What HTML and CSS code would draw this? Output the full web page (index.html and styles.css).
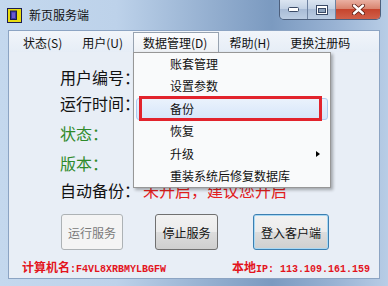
FILE: index.html
```html
<!DOCTYPE html>
<html lang="zh-CN">
<head>
    <meta charset="UTF-8">
    <title>新页服务端</title>
    <link rel="stylesheet" href="styles.css">
</head>
<body>
    <div class="window">
        <div class="titlebar">
            <svg class="app-icon" width="15" height="15" viewBox="0 0 15 15">
                <rect x="0.5" y="0.5" width="14" height="14" fill="#e8dc10" stroke="#1c1c50"/>
                <rect x="3.5" y="3" width="6" height="8.5" fill="#3a3aa8" stroke="#1c1c50"/>
                <rect x="5" y="4.5" width="3" height="5.5" fill="#6a5ad0"/>
            </svg>
            <span class="title">新页服务端</span>
            <div class="caption-btns">
                <div class="cap">
                    <svg width="11" height="5" viewBox="0 0 11 5"><rect x="0.5" y="0.5" width="10" height="4" rx="1" fill="#fff" stroke="#3a4a66"/></svg>
                </div>
                <div class="cap">
                    <svg width="12" height="10" viewBox="0 0 12 10"><rect x="0.5" y="0.5" width="11" height="9" fill="#fff" stroke="#3a4a66"/><rect x="2.5" y="3.5" width="7" height="4" fill="#8ea3bd" stroke="#3a4a66"/></svg>
                </div>
                <div class="cap close">
                    <svg width="13" height="11" viewBox="0 0 13 11"><path d="M2 1.5 L11 9.5 M11 1.5 L2 9.5" stroke="#5a1a10" stroke-width="4" stroke-linecap="round"/><path d="M2 1.5 L11 9.5 M11 1.5 L2 9.5" stroke="#fff" stroke-width="2.4" stroke-linecap="round"/></svg>
                </div>
            </div>
        </div>
        <div class="client">
            <div class="menubar">
                <span class="menu-item">状态(S)</span>
                <span class="menu-item">用户(U)</span>
                <span class="menu-item open">数据管理(D)
                    <div class="dropdown">
                        <div class="dd-item">账套管理</div>
                        <div class="dd-item">设置参数</div>
                        <div class="dd-item hover">备份</div>
                        <div class="dd-item">恢复</div>
                        <div class="dd-item sub">升级<span class="arrow"></span></div>
                        <div class="dd-item">重装系统后修复数据库</div>
                        <div class="mark"></div>
                    </div>
                </span>
                <span class="menu-item">帮助(H)</span>
                <span class="menu-item">更换注册码</span>
            </div>
            <div class="info">
                <div class="row">用户编号：</div>
                <div class="row">运行时间：</div>
                <div class="row green gap">状态：</div>
                <div class="row green gap">版本：</div>
                <div class="row last">自动备份：<span class="warn">未开启，建议您开启</span></div>
            </div>
            <div class="actions">
                <button class="btn run" disabled>运行服务</button>
                <button class="btn stop">停止服务</button>
                <button class="btn login">登入客户端</button>
            </div>
            <div class="footer">
                <span class="host"><b>计算机名</b><span class="mono">:F4VL8XRBMYLBGFW</span></span>
                <span class="ip"><b>本地</b><span class="mono">IP: 113.109.161.159</span></span>
            </div>
        </div>
    </div>
</body>
</html>
```

FILE: styles.css
```css
body {
    margin: 0;
    font-family: "Noto Sans CJK SC", "Noto Sans", sans-serif;
    color: #111;
}
.window {
    width: 388px;
    height: 286px;
    background: linear-gradient(90deg, #c4d8ee 0%, #bdd2ea 30%, #93aecf 55%, #7b9ac0 70%, #98b2d3 86%, #b8cde6 100%);
    display: flex;
    flex-direction: column;
    overflow: hidden;
}
.titlebar {
    position: relative;
    height: 30px;
    display: flex;
    align-items: center;
    padding-left: 7px;
}
.app-icon {
    display: block;
}
.title {
    margin-left: 7px;
    font-size: 12px;
    line-height: 14px;
}
.caption-btns {
    position: absolute;
    top: 0;
    right: 7px;
    display: flex;
    height: 19px;
    border: 1px solid #4d5f7c;
    border-top: none;
    border-radius: 0 0 5px 5px;
    overflow: hidden;
}
.cap {
    width: 27px;
    display: flex;
    align-items: center;
    justify-content: center;
    background: linear-gradient(#dbe5f1 0%, #c3d2e5 45%, #a9bcd6 50%, #bccde3 100%);
    border-right: 1px solid #6e82a0;
}
.cap.close {
    width: 44px;
    border-right: none;
    background: linear-gradient(#eab0a2 0%, #d98570 45%, #c6452e 50%, #d0604a 100%);
}
.client {
    margin: 0 8px;
    height: 249px;
    box-sizing: border-box;
    border: 1px solid #8ca4c3;
    background: #e8eef6;
}
.menubar {
    height: 21px;
    display: flex;
    align-items: flex-end;
    padding-left: 4px;
    background: linear-gradient(#f1f5fa, #e6edf6);
    font-size: 12px;
}
.menu-item {
    position: relative;
    height: 20px;
    line-height: 20px;
    padding: 0 9px;
    border: 1px solid transparent;
    border-bottom: none;
    box-sizing: border-box;
}
.menu-item.open {
    padding-right: 11px;
    border-color: #98a3b0;
    background: linear-gradient(#fbfcfd, #eef1f5);
}
.dropdown {
    position: absolute;
    left: -1px;
    top: 100%;
    width: 198px;
    box-sizing: border-box;
    padding: 0 2px;
    border: 1px solid #979797;
    background: #f9fafb;
    box-shadow: 2px 2px 3px rgba(0, 0, 0, 0.3);
    z-index: 2;
}
.dd-item {
    position: relative;
    height: 22.4px;
    line-height: 22.4px;
    padding-left: 34px;
    box-sizing: border-box;
    white-space: nowrap;
}
.dd-item.hover {
    background: linear-gradient(#eaf2fc, #d6e6fa);
    border: 1px solid #aecbef;
    border-radius: 3px;
    padding-left: 33px;
    line-height: 20.4px;
}
.arrow {
    position: absolute;
    right: 8px;
    top: 8px;
    border-left: 4px solid #000;
    border-top: 3.5px solid transparent;
    border-bottom: 3.5px solid transparent;
}
.mark {
    position: absolute;
    left: 5px;
    top: 43px;
    width: 183px;
    height: 25px;
    box-sizing: border-box;
    border: 3px solid #e2232c;
}
.info {
    padding: 12px 0 0 51px;
    font-size: 16px;
}
.row {
    line-height: 26px;
}
.row.gap {
    margin-top: 4px;
}
.row.last {
    margin-top: 1px;
}
.green {
    color: #2f8a2a;
}
.warn {
    margin-left: 3px;
    color: #e3201c;
}
.actions {
    display: flex;
    margin-top: 11px;
    padding-left: 52px;
}
.btn {
    height: 36px;
    padding: 0;
    font-family: inherit;
    font-size: 12px;
    color: #111;
    border: 1px solid #707070;
    border-radius: 3px;
    background: linear-gradient(#f2f2f2 0%, #ebebeb 50%, #dddddd 50%, #cfcfcf 100%);
}
.btn.run {
    width: 62px;
    color: #7a7a7a;
    border-color: #adb2b5;
    background: #f4f4f4;
}
.btn.stop {
    width: 63px;
    margin-left: 32px;
}
.btn.login {
    width: 76px;
    margin-left: 35px;
    border-color: #3c7fb1;
    box-shadow: inset 0 0 0 1px #a8d8f4;
}
.footer {
    display: flex;
    margin-top: 8px;
    padding-left: 13px;
    line-height: 14px;
    color: #e3141d;
}
.footer b {
    font-size: 12px;
}
.mono {
    font-family: "Liberation Mono", monospace;
    font-size: 10px;
    font-weight: bold;
}
.host {
    width: 210px;
}
```
